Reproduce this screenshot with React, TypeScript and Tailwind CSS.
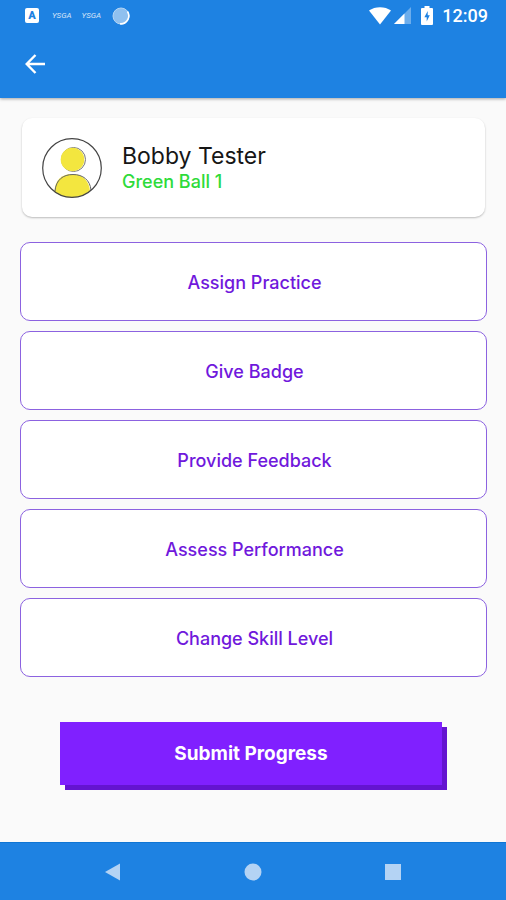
import { clsx } from "clsx";

const actions = [
  "Assign Practice",
  "Give Badge",
  "Provide Feedback",
  "Assess Performance",
  "Change Skill Level",
];

function StatusBar() {
  return (
    <div className="flex h-[31px] items-center justify-between pr-[18px] pl-[25px] text-white">
      <div className="flex items-center">
        <span className="flex h-[15px] w-[14px] items-center justify-center rounded-xs bg-white font-['Roboto',sans-serif] text-[11px] leading-none font-black text-[#1e82e2]">
          A
        </span>
        <span className="ml-[13px] font-['Roboto',sans-serif] text-[8px] leading-none italic opacity-80">
          YSGA
        </span>
        <span className="ml-[10px] font-['Roboto',sans-serif] text-[8px] leading-none italic opacity-80">
          YSGA
        </span>
        <svg viewBox="0 0 18 18" className="ml-[11px] h-[18px] w-[18px]" aria-hidden="true">
          <circle cx="9" cy="9" r="8" fill="#8fc0ef" stroke="#b4d5f4" />
          <path d="M15.5 4.500A8 8 0 0 1 8 16.800" fill="none" stroke="#fff" strokeWidth="1.600" />
        </svg>
      </div>
      <div className="flex items-center">
        <svg viewBox="0 0 22 18" className="h-[18px] w-[22px]" aria-hidden="true">
          <path d="M0 3.6C6 -1 16 -1 22 3.6L11 17.6Z" fill="#fff" />
        </svg>
        <svg viewBox="0 0 17 17" className="ml-[3px] h-[17px] w-[17px]" aria-hidden="true">
          <path d="M17 0V17H0Z" fill="#fff" opacity="0.35" />
          <path d="M10.500 6.500V17H0Z" fill="#fff" />
        </svg>
        <svg viewBox="0 0 12 19" className="ml-[10px] h-[19px] w-[12px]" aria-hidden="true">
          <path d="M3.500 0h5v2H11a1 1 0 0 1 1 1v15a1 1 0 0 1-1 1H1a1 1 0 0 1-1-1V3a1 1 0 0 1 1-1h2.500z" fill="#fff" />
          <path d="M6.700 5L3.400 11.200h2.300V15.500L8.800 9.300H6.700z" fill="#1e82e2" />
        </svg>
        <span className="ml-[9px] font-['Roboto',sans-serif] text-[18px] leading-none font-medium">
          12:09
        </span>
      </div>
    </div>
  );
}

function Avatar() {
  return (
    <svg viewBox="0 0 60 60" className="h-[60px] w-[60px] shrink-0" aria-hidden="true">
      <path d="M12.500 54C12.500 42 20 36 30 36S47 42 48 53A29 29 0 0 1 12.500 54Z" fill="#f3e63f" />
      <path d="M13 53C14 42 21 36.500 31 36.500S48 42 49 52" fill="none" stroke="#666" />
      <circle cx="31.500" cy="21.500" r="12" fill="#fff" stroke="#777" />
      <circle cx="30.500" cy="21.500" r="11.800" fill="#f3e63f" />
      <circle cx="30" cy="30" r="29.300" fill="none" stroke="#444" strokeWidth="1.200" />
    </svg>
  );
}

function ActionButton({ label }: { label: string }) {
  return (
    <button
      type="button"
      className={clsx(
        "h-[79px] w-full rounded-[10px] border border-[#8c62e0] bg-white pt-[2px] pl-[2px]",
        "text-[18px] font-medium text-[#7018dc]"
      )}
    >
      {label}
    </button>
  );
}

export default function App() {
  return (
    <div className="flex min-h-screen flex-col bg-[#fafafa] font-['Inter',sans-serif]">
      <header className="bg-[#1e82e2] pb-[19px] shadow-[0_1px_3px_rgba(0,0,0,0.35)]">
        <StatusBar />
        <div className="flex h-[48px] items-end pb-[5px] pl-[25px]">
          <button type="button" aria-label="Back" className="text-white">
            <svg viewBox="0 0 20 20" className="h-[20px] w-[20px]" fill="none" stroke="currentColor" strokeWidth="2.400" aria-hidden="true">
              <path d="M10.500 1L1.700 10l8.800 9M1.700 10H20" />
            </svg>
          </button>
        </div>
      </header>

      <main className="flex flex-1 flex-col pt-[20px] pr-[19px] pl-5">
        <section className="mx-[2px] flex h-[99px] items-center gap-5 rounded-[10px] bg-white px-5 shadow-[0_1px_2px_rgba(0,0,0,0.25)]">
          <Avatar />
          <div>
            <h1 className="text-[23px] leading-[28px] text-[#161616]">Bobby Tester</h1>
            <p className="text-[18px] leading-6 font-medium text-[#2edb3a]">Green Ball 1</p>
          </div>
        </section>

        <div className="mt-[25px] flex flex-col gap-[10px]">
          {actions.map((label) => (
            <ActionButton key={label} label={label} />
          ))}
        </div>

        <button
          type="button"
          className="mt-[45px] mr-[45px] mb-[56px] ml-10 h-[63px] bg-[#8020ff] pt-[2px] text-[19px] font-bold text-white shadow-[5px_5px_0_#6414d0]"
        >
          Submit Progress
        </button>
      </main>

      <nav className="flex h-[58px] items-center justify-around border-t border-[#0f75d4] bg-[#1e82e2] px-[43px] text-[#b4d3f4]">
        <button type="button" aria-label="Back">
          <svg viewBox="0 0 18 18" className="h-[18px] w-[18px]" fill="currentColor" aria-hidden="true">
            <path d="M1 9L16 0.500V17.500Z" />
          </svg>
        </button>
        <button type="button" aria-label="Home">
          <svg viewBox="0 0 18 18" className="h-[18px] w-[18px]" fill="currentColor" aria-hidden="true">
            <circle cx="9" cy="9" r="8.500" />
          </svg>
        </button>
        <button type="button" aria-label="Recent apps">
          <svg viewBox="0 0 18 18" className="h-[18px] w-[18px]" fill="currentColor" aria-hidden="true">
            <path d="M1 1h16v16H1z" />
          </svg>
        </button>
      </nav>
    </div>
  );
}
